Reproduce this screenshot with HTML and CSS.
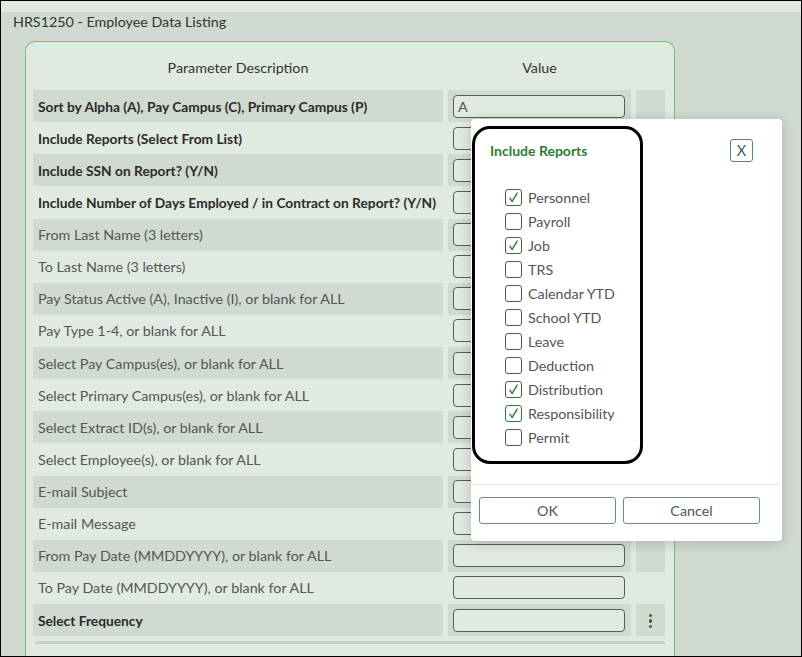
FILE: index.html
```html
<!DOCTYPE html>
<html>
<head>
<meta charset="utf-8">
<link rel="stylesheet" href="styles.css">
</head>
<body>
<div class="frame">
  <div class="topstrip"></div>
  <div class="titlebar">HRS1250 - Employee Data Listing</div>
  <div class="main">
    <div class="card">
      <div class="grid">
        <div class="head">Parameter Description</div>
        <div class="head">Value</div>
        <div class="head"></div>

        <div class="cell lbl strong alt">Sort by Alpha (A), Pay Campus (C), Primary Campus (P)</div>
        <div class="cell val alt"><div class="inp">A</div></div>
        <div class="cell act alt"></div>

        <div class="cell lbl strong">Include Reports (Select From List)</div>
        <div class="cell val"><div class="inp"></div></div>
        <div class="cell act"></div>

        <div class="cell lbl strong alt">Include SSN on Report? (Y/N)</div>
        <div class="cell val alt"><div class="inp"></div></div>
        <div class="cell act alt"></div>

        <div class="cell lbl strong">Include Number of Days Employed / in Contract on Report? (Y/N)</div>
        <div class="cell val"><div class="inp"></div></div>
        <div class="cell act"></div>

        <div class="cell lbl alt">From Last Name (3 letters)</div>
        <div class="cell val alt"><div class="inp"></div></div>
        <div class="cell act alt"></div>

        <div class="cell lbl">To Last Name (3 letters)</div>
        <div class="cell val"><div class="inp"></div></div>
        <div class="cell act"></div>

        <div class="cell lbl alt">Pay Status Active (A), Inactive (I), or blank for ALL</div>
        <div class="cell val alt"><div class="inp"></div></div>
        <div class="cell act alt"></div>

        <div class="cell lbl">Pay Type 1-4, or blank for ALL</div>
        <div class="cell val"><div class="inp"></div></div>
        <div class="cell act"></div>

        <div class="cell lbl alt">Select Pay Campus(es), or blank for ALL</div>
        <div class="cell val alt"><div class="inp"></div></div>
        <div class="cell act alt"></div>

        <div class="cell lbl">Select Primary Campus(es), or blank for ALL</div>
        <div class="cell val"><div class="inp"></div></div>
        <div class="cell act"></div>

        <div class="cell lbl alt">Select Extract ID(s), or blank for ALL</div>
        <div class="cell val alt"><div class="inp"></div></div>
        <div class="cell act alt"></div>

        <div class="cell lbl">Select Employee(s), or blank for ALL</div>
        <div class="cell val"><div class="inp"></div></div>
        <div class="cell act"></div>

        <div class="cell lbl alt">E-mail Subject</div>
        <div class="cell val alt"><div class="inp"></div></div>
        <div class="cell act alt"></div>

        <div class="cell lbl">E-mail Message</div>
        <div class="cell val"><div class="inp"></div></div>
        <div class="cell act"></div>

        <div class="cell lbl alt">From Pay Date (MMDDYYYY), or blank for ALL</div>
        <div class="cell val alt"><div class="inp"></div></div>
        <div class="cell act alt"></div>

        <div class="cell lbl">To Pay Date (MMDDYYYY), or blank for ALL</div>
        <div class="cell val"><div class="inp"></div></div>
        <div class="cell act"></div>

        <div class="cell lbl strong alt">Select Frequency</div>
        <div class="cell val alt"><div class="inp"></div></div>
        <div class="cell act alt"><span class="kebab"><i></i><i></i><i></i></span></div>
      </div>
      <div class="bottomline"></div>
    </div>
  </div>

  <div class="dialog">
    <div class="dtop">
      <div class="highlight">
        <div class="dtitle">Include Reports</div>
        <ul class="checks">
          <li><span class="cb on"><svg viewBox="0 0 17 17"><polyline points="4,9 7,13 13,3"/></svg></span>Personnel</li>
          <li><span class="cb"></span>Payroll</li>
          <li><span class="cb on"><svg viewBox="0 0 17 17"><polyline points="4,9 7,13 13,3"/></svg></span>Job</li>
          <li><span class="cb"></span>TRS</li>
          <li><span class="cb"></span>Calendar YTD</li>
          <li><span class="cb"></span>School YTD</li>
          <li><span class="cb"></span>Leave</li>
          <li><span class="cb"></span>Deduction</li>
          <li><span class="cb on"><svg viewBox="0 0 17 17"><polyline points="4,9 7,13 13,3"/></svg></span>Distribution</li>
          <li><span class="cb on focus"><svg viewBox="0 0 17 17"><polyline points="4,9 7,13 13,3"/></svg></span>Responsibility</li>
          <li><span class="cb"></span>Permit</li>
        </ul>
      </div>
      <div class="xbtn">X</div>
    </div>
    <div class="dsep"></div>
    <div class="dbtns">
      <div class="btn">OK</div>
      <div class="btn">Cancel</div>
    </div>
  </div>
</div>
</body>
</html>
```

FILE: styles.css
```css
* { box-sizing: border-box; }
html, body { margin: 0; padding: 0; }
body {
  font-family: Lato, "Open Sans", sans-serif;
  font-size: 14.3px;
  color: #333;
}
.frame {
  position: relative;
  width: 802px;
  height: 657px;
  border: 1px solid #000;
  background: #d0dad0;
  overflow: hidden;
}
.topstrip {
  height: 11px;
  background: #e1eae1;
}
.titlebar {
  height: 29px;
  padding-left: 12px;
  line-height: 20px;
  color: #333;
  font-size: 14.3px;
}
.main {
  padding-left: 24px;
}
.card {
  width: 650px;
  height: 640px;
  background: #e1eae1;
  border: 1px solid #72c572;
  border-bottom: none;
  border-radius: 10px 10px 0 0;
  padding: 0 8px 0 7px;
}
.grid {
  display: grid;
  grid-template-columns: 410px 183px 29px;
  grid-auto-rows: 32.125px;
  grid-template-rows: 48px;
  column-gap: 5px;
}
.head {
  text-align: center;
  color: #333;
  font-size: 14.3px;
  padding-top: 17px;
}
.cell {
  display: flex;
  align-items: center;
}
.alt { background: #d0dad0; }
.lbl {
  padding-left: 5px;
  color: #555;
  font-size: 14.3px;
}
.lbl.strong {
  color: #2b2b2b;
  font-weight: 700;
  font-size: 13.75px;
}
.val { padding: 0 6px 0 5px; }
.inp {
  width: 100%;
  height: 23px;
  border: 1px solid #5a5a5a;
  border-radius: 4px;
  background: #e1eae1;
  padding-left: 4px;
  line-height: 21px;
  color: #555;
  font-size: 14.3px;
}
.act { justify-content: center; }
.kebab {
  display: flex;
  flex-direction: column;
  gap: 2px;
  margin-top: 2px;
}
.kebab i {
  display: block;
  width: 3.5px;
  height: 3.5px;
  border-radius: 50%;
  background: #2e6b2e;
}
.bottomline {
  height: 3px;
  background: #c6d0c6;
  margin: 5px 1px 0 2px;
}

/* dialog */
.dialog {
  position: absolute;
  left: 470px;
  top: 118px;
  width: 311px;
  height: 422px;
  background: #fff;
  border-radius: 4px;
  box-shadow: 0 2px 14px rgba(0,0,0,0.18);
  display: flex;
  flex-direction: column;
}
.dtop {
  display: flex;
  align-items: flex-start;
}
.highlight {
  margin: 7px 0 0 1px;
  width: 171px;
  height: 338px;
  border: 3px solid #000;
  border-radius: 18px;
  padding: 14px 0 0 15px;
}
.dtitle {
  color: #2e7d32;
  font-weight: 700;
  font-size: 14px;
  line-height: 16px;
}
.checks {
  list-style: none;
  margin: 26px 0 0 15px;
  padding: 0;
}
.checks li {
  display: flex;
  align-items: center;
  height: 24.1px;
  color: #555;
  font-size: 14.3px;
}
.cb {
  width: 17px;
  height: 17px;
  border: 1px solid #555;
  border-radius: 3px;
  margin-right: 6px;
  flex: none;
}
.cb svg {
  display: block;
  width: 15px;
  height: 15px;
}
.cb polyline {
  fill: none;
  stroke: #2e7d32;
  stroke-width: 1.6;
}
.cb.focus { border-color: #2e7d32; }
.xbtn {
  margin: 20px 29px 0 auto;
  width: 23px;
  height: 23px;
  border: 1px solid #4f8f5f;
  border-radius: 3px;
  color: #2f5f6f;
  text-align: center;
  line-height: 21px;
  font-size: 14.5px;
}
.dsep {
  height: 1px;
  background: #dfe3e8;
  margin: 20px 2px 0 2px;
}
.dbtns {
  display: flex;
  gap: 7px;
  padding: 12px 0 0 8px;
}
.btn {
  width: 137px;
  height: 27px;
  border: 1px solid #5b9a6b;
  border-radius: 3px;
  text-align: center;
  line-height: 25px;
  color: #555;
  font-size: 14.3px;
}
```
